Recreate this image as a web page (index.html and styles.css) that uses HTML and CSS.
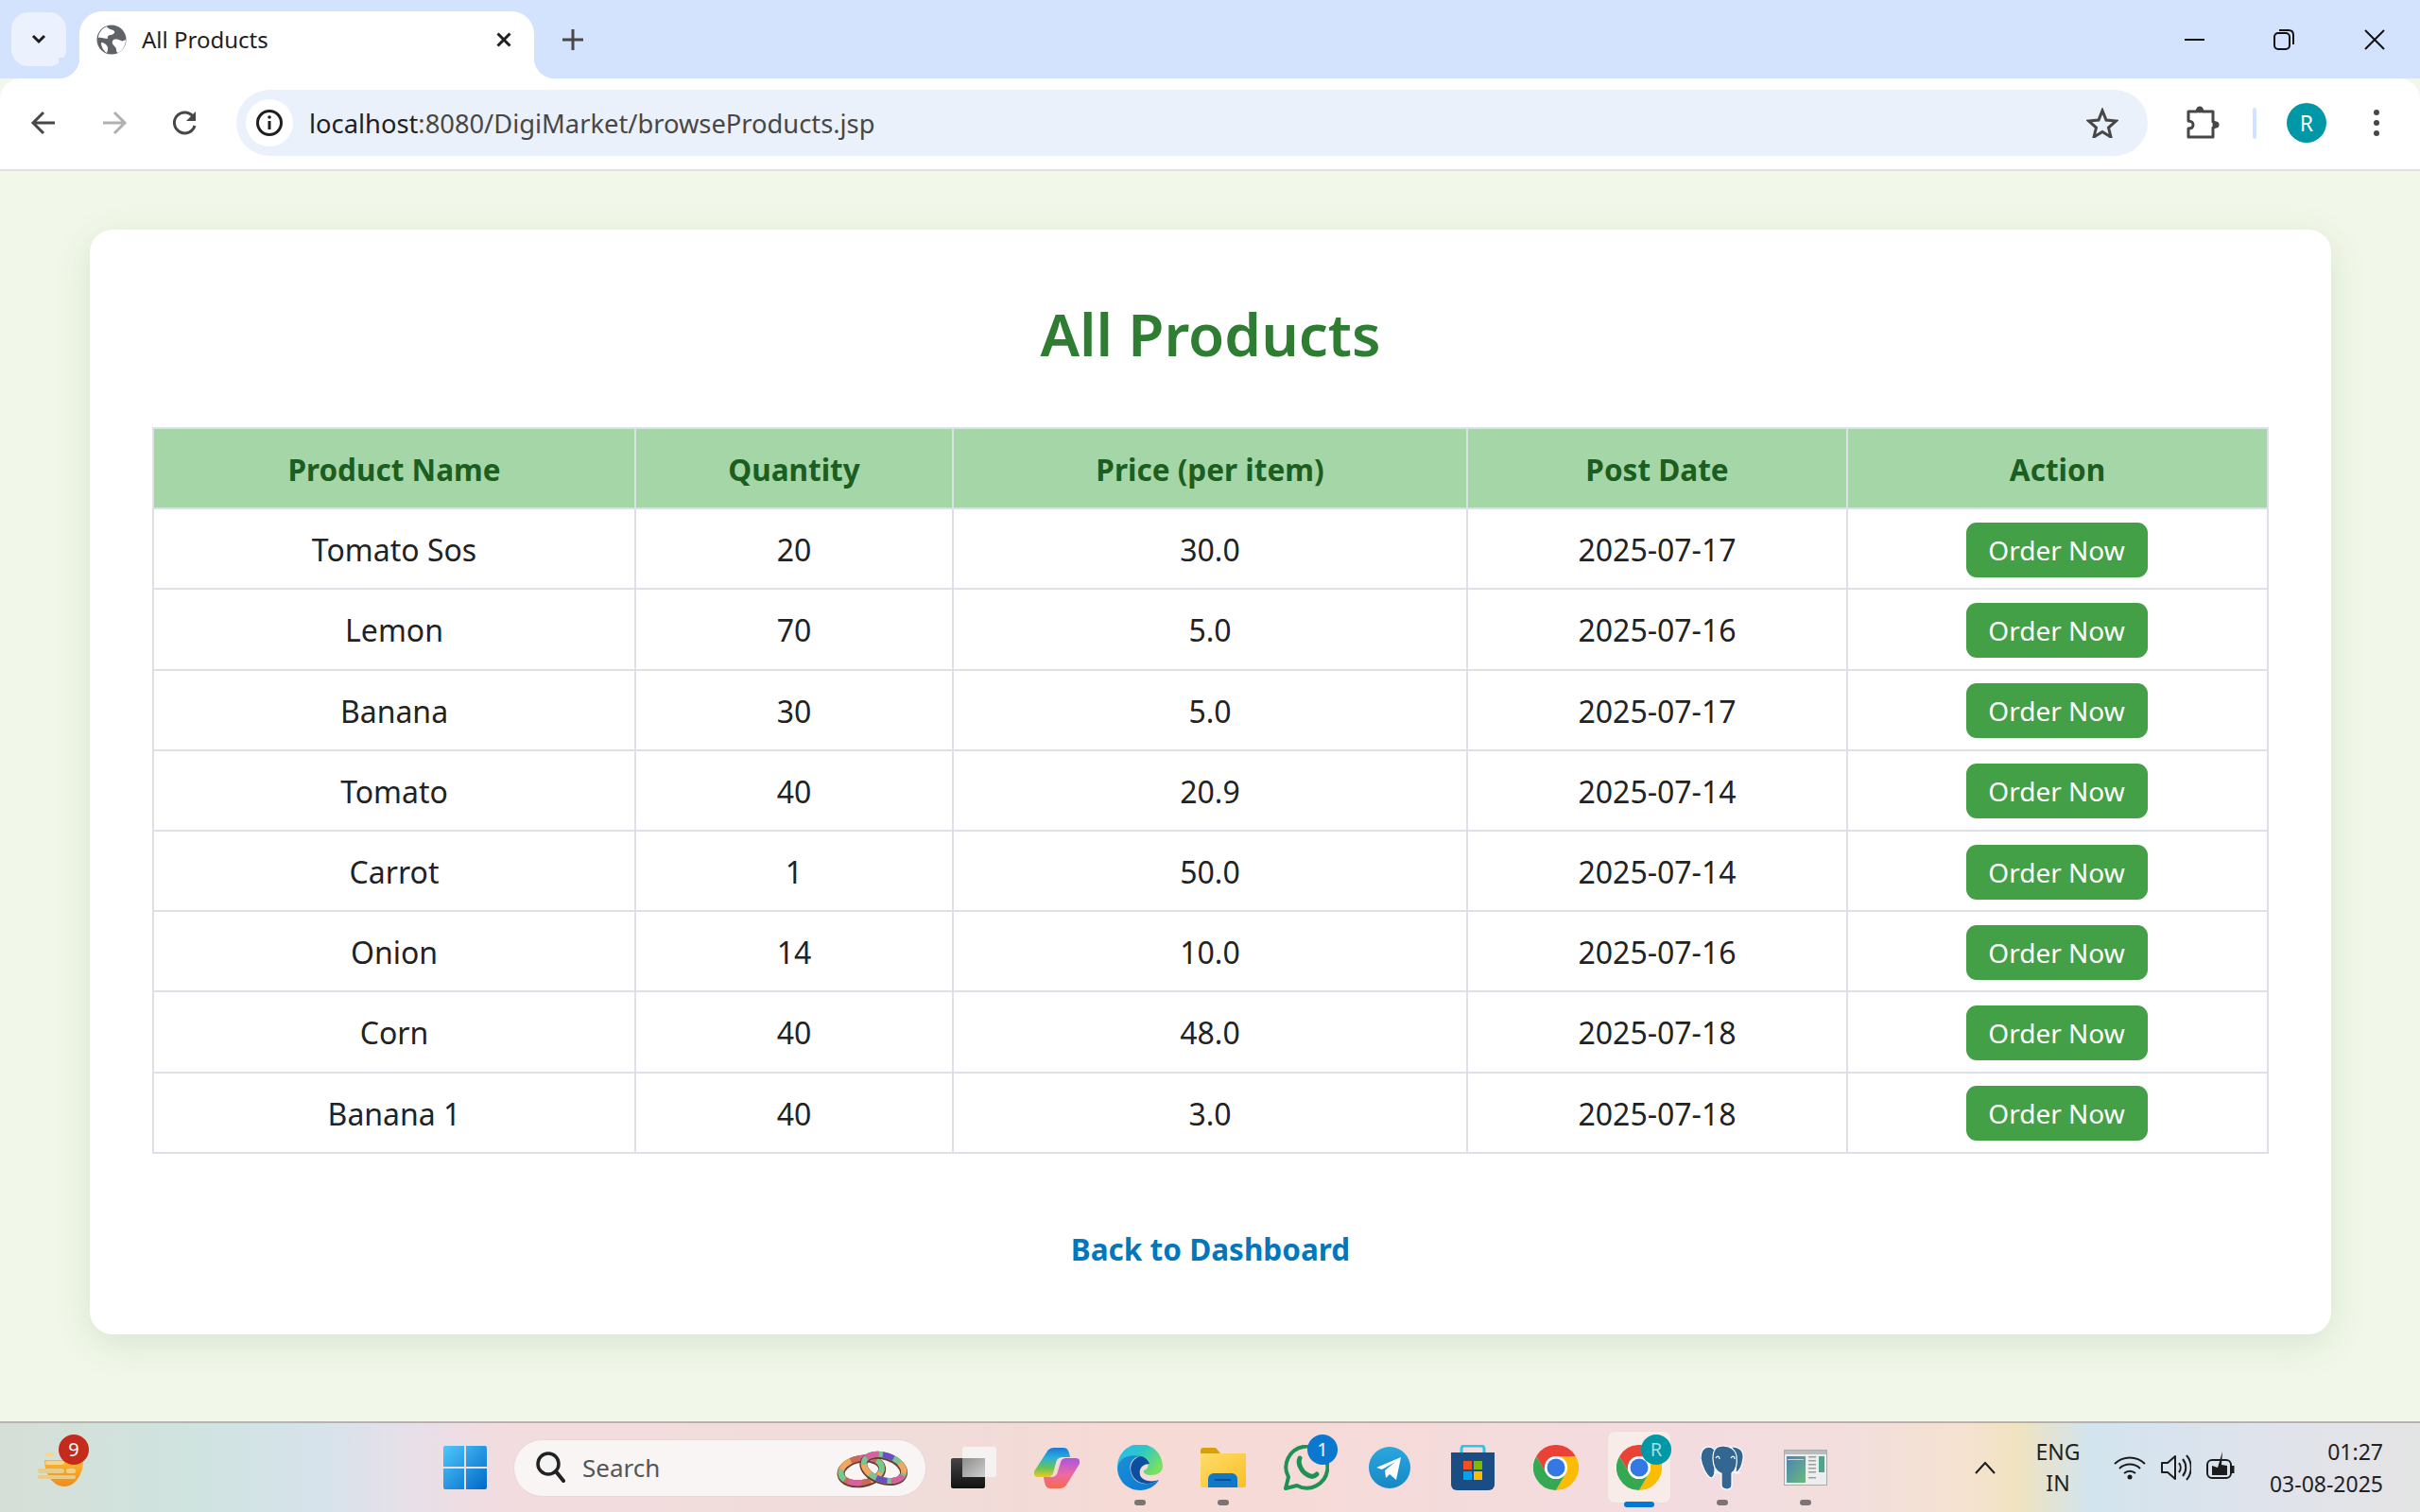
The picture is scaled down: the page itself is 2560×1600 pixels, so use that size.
FILE: index.html
```html
<!DOCTYPE html>
<html lang="en">
<head>
    <meta charset="UTF-8">
    <title>All Products</title>
    <link rel="stylesheet" href="styles.css">
</head>
<body>
    <!-- Browser tabs -->
    <div class="tabstrip">
        <div class="tab-search">
            <svg width="18" height="12" viewBox="0 0 18 12"><path d="M3 2l6 6 6-6" fill="none" stroke="#1f1f1f" stroke-width="3"/></svg>
        </div>
        <div class="tab">
            <svg class="favicon" width="32" height="32" viewBox="0 0 32 32">
                <circle cx="16" cy="16" r="15.5" fill="#5f6368"/>
                <path d="M11 2c1 3 6 3 8 5 1 2-2 4-4 4s-4 2-3 4c-3 0-7-2-10-1 0-5 4-10 9-12zM18 16c3-1 6 0 8 1 1 1 3 0 5-1 0 6-3 11-8 14-3-1-1-4-3-6-2-3-5-4-2-8zM5 19c3 0 6 2 7 5 0 2 0 4-1 6-3-2-6-6-6-11z" fill="#fff"/>
            </svg>
            <span class="tab-title">All Products</span>
            <svg class="tab-close" width="18" height="18" viewBox="0 0 18 18"><path d="M2.5 2.5l13 13M15.500 2.500l-13 13" stroke="#1f1f1f" stroke-width="3"/></svg>
        </div>
        <svg class="new-tab" width="24" height="24" viewBox="0 0 24 24"><path d="M12 1v22M1 12h22" stroke="#474747" stroke-width="3"/></svg>
        <div class="window-controls">
            <svg width="22" height="22" viewBox="0 0 22 22"><path d="M0 11h21" stroke="#111" stroke-width="2"/></svg>
            <svg width="22" height="22" viewBox="0 0 22 22"><rect x="1" y="4" width="16" height="17" rx="4" fill="none" stroke="#111" stroke-width="2"/><path d="M6 1h10c3 0 5 2 5 5v10" fill="none" stroke="#111" stroke-width="2"/></svg>
            <svg width="22" height="22" viewBox="0 0 22 22"><path d="M1 1l20 20M21 1L1 21" stroke="#111" stroke-width="2"/></svg>
        </div>
    </div>

    <!-- Address bar -->
    <div class="toolbar">
        <svg class="nav-icon" width="30" height="30" viewBox="0 0 30 30"><path d="M27 15H5M15 4L4 15l11 11" fill="none" stroke="#474747" stroke-width="3"/></svg>
        <svg class="nav-icon" width="30" height="30" viewBox="0 0 30 30"><path d="M3 15h22M15 4l11 11-11 11" fill="none" stroke="#b1b1b1" stroke-width="3"/></svg>
        <svg class="nav-icon" width="30" height="30" viewBox="0 0 30 30"><path d="M25 18a11 11 0 1 1-2-10" fill="none" stroke="#474747" stroke-width="3"/><path d="M26 3v10H16z" fill="#474747"/></svg>
        <div class="omnibox">
            <div class="site-info">
                <svg width="30" height="30" viewBox="0 0 30 30"><circle cx="15" cy="15" r="12.500" fill="none" stroke="#1f1f1f" stroke-width="3"/><path d="M15 13v9" stroke="#1f1f1f" stroke-width="3"/><circle cx="15" cy="9" r="1.800" fill="#1f1f1f"/></svg>
            </div>
            <span class="url"><span class="url-host">localhost</span>:8080/DigiMarket/browseProducts.jsp</span>
            <svg class="star" width="34" height="32" viewBox="0 0 34 32"><path d="M17 3l4 10 10.500 1-8 7 2.500 10L17 25.500 8 31l2.500-10-8-7L13 13z" fill="none" stroke="#474747" stroke-width="3"/></svg>
        </div>
        <svg class="puzzle" width="36" height="36" viewBox="0 0 36 36"><path d="M3 6h9a3 3 0 0 1 6 0h11v11a3 3 0 0 1 0 6v10H3V24c4 0 5-2 5-4s-2-4-5-4z" fill="none" stroke="#474747" stroke-width="3" stroke-linejoin="round"/><circle cx="15" cy="4" r="3.500" fill="#474747"/><circle cx="32" cy="20" r="3.500" fill="#474747"/></svg>
        <div class="toolbar-sep"></div>
        <div class="avatar">R</div>
        <div class="menu-dots"><i></i><i></i><i></i></div>
    </div>

    <!-- Page -->
    <main class="page">
        <div class="card">
            <h1>All Products</h1>
            <table>
                <colgroup>
                    <col class="col-name">
                    <col class="col-qty">
                    <col class="col-price">
                    <col class="col-date">
                    <col class="col-action">
                </colgroup>
                <thead>
                    <tr>
                        <th>Product Name</th>
                        <th>Quantity</th>
                        <th>Price (per item)</th>
                        <th>Post Date</th>
                        <th>Action</th>
                    </tr>
                </thead>
                <tbody>
                    <tr><td>Tomato Sos</td><td>20</td><td>30.0</td><td>2025-07-17</td><td><a class="order-btn">Order Now</a></td></tr>
                    <tr><td>Lemon</td><td>70</td><td>5.0</td><td>2025-07-16</td><td><a class="order-btn">Order Now</a></td></tr>
                    <tr><td>Banana</td><td>30</td><td>5.0</td><td>2025-07-17</td><td><a class="order-btn">Order Now</a></td></tr>
                    <tr><td>Tomato</td><td>40</td><td>20.9</td><td>2025-07-14</td><td><a class="order-btn">Order Now</a></td></tr>
                    <tr><td>Carrot</td><td>1</td><td>50.0</td><td>2025-07-14</td><td><a class="order-btn">Order Now</a></td></tr>
                    <tr><td>Onion</td><td>14</td><td>10.0</td><td>2025-07-16</td><td><a class="order-btn">Order Now</a></td></tr>
                    <tr><td>Corn</td><td>40</td><td>48.0</td><td>2025-07-18</td><td><a class="order-btn">Order Now</a></td></tr>
                    <tr><td>Banana 1</td><td>40</td><td>3.0</td><td>2025-07-18</td><td><a class="order-btn">Order Now</a></td></tr>
                </tbody>
            </table>
            <a class="back-link">Back to Dashboard</a>
        </div>
    </main>

    <!-- Windows taskbar -->
    <footer class="taskbar">
        <div class="widget">
            <svg width="48" height="40" viewBox="0 0 48 40">
                <defs><linearGradient id="bowl" x1="0" y1="0" x2="0" y2="1"><stop offset="0" stop-color="#f7b733"/><stop offset="1" stop-color="#f08c1a"/></linearGradient></defs>
                <path d="M7 10h41c0 16-9 28-20 28S7 26 7 10z" fill="url(#bowl)"/>
                <rect x="8" y="2" width="10" height="4" rx="2" fill="#f4d98e"/>
                <rect x="8" y="11" width="20" height="4" rx="2" fill="#f2d592"/>
                <rect x="0" y="19" width="28" height="5" rx="2.500" fill="#e8cc8c"/>
                <rect x="30" y="19" width="10" height="5" rx="2.500" fill="#f2cf85"/>
                <rect x="0" y="26" width="40" height="4" rx="2" fill="#e8cc8c"/>
            </svg>
            <span class="badge badge-red">9</span>
        </div>
        <div class="task-item start">
            <svg width="46" height="46" viewBox="0 0 46 46">
                <defs><linearGradient id="win" x1="0" y1="0" x2="1" y2="1"><stop offset="0" stop-color="#4fc8fb"/><stop offset="1" stop-color="#0068c8"/></linearGradient></defs>
                <path d="M0 2a2 2 0 0 1 2-2h20v22H0zM24 0h20a2 2 0 0 1 2 2v20H24zM0 24h22v22H2a2 2 0 0 1-2-2zM24 24h22v20a2 2 0 0 1-2 2H24z" fill="url(#win)"/>
            </svg>
        </div>
        <div class="search-box">
            <svg width="32" height="36" viewBox="0 0 32 36"><circle cx="14" cy="14" r="11" fill="#f4f4f4" stroke="#222" stroke-width="3.500"/><path d="M22 22l8 10" stroke="#222" stroke-width="4" stroke-linecap="round"/></svg>
            <span class="search-text">Search</span>
            <svg class="rings" width="76" height="44" viewBox="0 0 76 44">
                <g fill="none" transform="rotate(-10 26 24)">
                    <ellipse cx="26" cy="26" rx="22" ry="13" stroke="#6b3a30" stroke-width="8"/>
                    <ellipse cx="26" cy="25" rx="22" ry="13" stroke="#c96a55" stroke-width="6"/>
                    <ellipse cx="26" cy="25" rx="22" ry="13" stroke="#f0a860" stroke-width="6" stroke-dasharray="14 40" stroke-dashoffset="-6"/>
                    <ellipse cx="26" cy="25" rx="22" ry="13" stroke="#d85fa0" stroke-width="6" stroke-dasharray="14 40" stroke-dashoffset="-30"/>
                    <ellipse cx="26" cy="25" rx="22" ry="13" stroke="#78c88c" stroke-width="6" stroke-dasharray="12 42" stroke-dashoffset="-48"/>
                </g>
                <g fill="none" transform="rotate(18 50 22)">
                    <ellipse cx="50" cy="23" rx="22" ry="13" stroke="#6b3a30" stroke-width="8"/>
                    <ellipse cx="50" cy="22" rx="22" ry="13" stroke="#79c494" stroke-width="6"/>
                    <ellipse cx="50" cy="22" rx="22" ry="13" stroke="#d85fa0" stroke-width="6" stroke-dasharray="14 44" stroke-dashoffset="-2"/>
                    <ellipse cx="50" cy="22" rx="22" ry="13" stroke="#6a4fc4" stroke-width="6" stroke-dasharray="12 46" stroke-dashoffset="-20"/>
                    <ellipse cx="50" cy="22" rx="22" ry="13" stroke="#f0a860" stroke-width="6" stroke-dasharray="12 46" stroke-dashoffset="-40"/>
                </g>
            </svg>
        </div>
        <div class="task-items">
            <div class="task-item">
                <svg width="48" height="44" viewBox="0 0 48 44">
                    <defs>
                        <linearGradient id="blk" x1="0" y1="0" x2="0" y2="1"><stop offset="0" stop-color="#454545"/><stop offset="1" stop-color="#111"/></linearGradient>
                        <linearGradient id="lap" x1="0" y1="0" x2="1" y2="1"><stop offset="0" stop-color="#8d8d8d"/><stop offset="1" stop-color="#cfcfcf"/></linearGradient>
                    </defs>
                    <rect x="0" y="12" width="36" height="32" rx="2" fill="url(#blk)"/>
                    <rect x="12" y="0" width="36" height="32" rx="2" fill="#f5f3f2"/>
                    <rect x="12" y="12" width="24" height="20" fill="url(#lap)"/>
                </svg>
            </div>
            <div class="task-item">
                <svg width="48" height="43" viewBox="0 0 48 43">
                    <defs>
                        <linearGradient id="cop1" x1="0" y1="0" x2="0" y2="1"><stop offset="0" stop-color="#1a78dc"/><stop offset=".35" stop-color="#2ab0d8"/><stop offset=".7" stop-color="#6cc44e"/><stop offset="1" stop-color="#f2c62f"/></linearGradient>
                        <linearGradient id="cop2" x1="0" y1="0" x2="0" y2="1"><stop offset="0" stop-color="#a855e0"/><stop offset=".55" stop-color="#ee6aa0"/><stop offset="1" stop-color="#f7694a"/></linearGradient>
                    </defs>
                    <path d="M13 5C15 1 18 0 22 0h9c4 0 6 3 7 10h-7c-5 0-7 2-8 6l-3 11c-1 3-3 4-6 4H4c-3 0-5-2-4-6z" fill="url(#cop1)"/>
                    <path d="M35 38c-2 4-5 5-9 5h-9c-4 0-6-3-7-12h7c5 0 7-2 8-6l3-10c1-3 3-4 6-4h10c3 0 5 2 4 6z" fill="url(#cop2)"/>
                </svg>
            </div>
            <div class="task-item has-dot">
                <svg width="48" height="48" viewBox="0 0 48 48">
                    <defs>
                        <linearGradient id="edge1" x1="0" y1="0" x2="1" y2=".6"><stop offset="0" stop-color="#2bb8ee"/><stop offset=".5" stop-color="#2cc8c8"/><stop offset="1" stop-color="#7ae05f"/></linearGradient>
                        <linearGradient id="edge2" x1="0" y1="0" x2="1" y2="1"><stop offset="0" stop-color="#1a8fd8"/><stop offset="1" stop-color="#0d78d0"/></linearGradient>
                    </defs>
                    <path d="M0 24A24 24 0 0 1 48 22C48 29 42 32 36 32C31 32 27 30 28 27C33 26 34 20 30 16C24 10 8 10 0 24Z" fill="url(#edge1)"/>
                    <path d="M0 24C3 12 14 10 24 12C16 13 12 20 14 28C16 40 30 46 44 37C40 44 32 48 24 48C10 48 0 37 0 24Z" fill="url(#edge2)"/>
                    <path d="M24 12C17 14 12 21 15 30C18 40 32 45 44 37C36 40 26 38 24 32C22 24 28 20 34 20C32 15 28 12 24 12Z" fill="#0b4f9e"/>
                </svg>
            </div>
            <div class="task-item has-dot">
                <svg width="48" height="42" viewBox="0 0 48 42">
                    <defs><linearGradient id="folder" x1="0" y1="0" x2="1" y2="1"><stop offset="0" stop-color="#ffdc6b"/><stop offset="1" stop-color="#fbbf24"/></linearGradient></defs>
                    <path d="M0 3a3 3 0 0 1 3-3h13l5 6h24a3 3 0 0 1 3 3v6H0z" fill="#d99e08"/>
                    <path d="M0 6h48v34a2 2 0 0 1-2 2H2a2 2 0 0 1-2-2z" fill="url(#folder)"/>
                    <path d="M8 33a6 6 0 0 1 6-6h19a6 6 0 0 1 6 6v9H8z" fill="#0f78c8"/>
                    <rect x="15" y="33" width="17" height="2" fill="#0a4f8c"/>
                </svg>
            </div>
            <div class="task-item">
                <svg width="48" height="48" viewBox="0 0 48 48">
                    <path d="M2 46l3-12A22 22 0 1 1 14 43z" fill="none" stroke="#1f9155" stroke-width="4" stroke-linejoin="round"/>
                    <path d="M17 14C14 20 20 29 24 31C28 34 32 34 35 31" fill="none" stroke="#1f9155" stroke-width="5" stroke-linecap="round"/>
                </svg>
                <span class="badge badge-blue">1</span>
            </div>
            <div class="task-item">
                <svg width="44" height="44" viewBox="0 0 44 44">
                    <defs><linearGradient id="tg" x1="0" y1="0" x2="0" y2="1"><stop offset="0" stop-color="#2aa7df"/><stop offset="1" stop-color="#1688c4"/></linearGradient></defs>
                    <circle cx="22" cy="22" r="22" fill="url(#tg)"/>
                    <path d="M8 22L34 11l-5 24-7-6-4 4-1-8 11-9-14 8z" fill="#fff"/>
                </svg>
            </div>
            <div class="task-item">
                <svg width="46" height="48" viewBox="0 0 46 48">
                    <path d="M11 10V4a3 3 0 0 1 3-3h18a3 3 0 0 1 3 3v6" fill="none" stroke="#2ac4ee" stroke-width="3"/>
                    <path d="M0 8h46v34a6 6 0 0 1-6 6H6a6 6 0 0 1-6-6z" fill="#1b4d85"/>
                    <rect x="13" y="17" width="9" height="9" fill="#f25022"/>
                    <rect x="24" y="17" width="9" height="9" fill="#7fba00"/>
                    <rect x="13" y="28" width="9" height="9" fill="#00a4ef"/>
                    <rect x="24" y="28" width="9" height="9" fill="#ffb900"/>
                </svg>
            </div>
            <div class="task-item">
                <svg width="48" height="48" viewBox="0 0 48 48">
                    <g id="chrome-logo">
                        <path d="M24 12H44.800A24 24 0 0 0 3.200 12L13.600 30A12 12 0 0 1 24 12Z" fill="#ea4335"/>
                        <path d="M44.800 12H24A12 12 0 0 1 34.400 30L24 48A24 24 0 0 0 44.800 12Z" fill="#fbbc04"/>
                        <path d="M3.200 12L13.600 30A12 12 0 0 0 34.400 30L24 48A24 24 0 0 1 3.200 12Z" fill="#34a853"/>
                        <circle cx="24" cy="24" r="12" fill="#fff"/>
                        <circle cx="24" cy="24" r="9.500" fill="#3478e5"/>
                    </g>
                </svg>
            </div>
            <div class="task-item active">
                <div class="active-bg"></div>
                <svg width="48" height="48" viewBox="0 0 48 48"><use href="#chrome-logo"/></svg>
                <span class="badge badge-teal">R</span>
                <div class="active-bar"></div>
            </div>
            <div class="task-item has-dot">
                <svg width="46" height="48" viewBox="0 0 46 48">
                    <g fill="#336791" stroke="#fff" stroke-width="1.200">
                        <path d="M8 2C2 3 0 8 0 14C1 22 6 33 11 35C13 35 14 33 15 30L15 5C13 3 11 2 8 2Z"/>
                        <path d="M32 2C40 1 46 6 45 14C44 22 41 28 37 30C37 28 38 20 37 12C36 8 34 4 32 2Z"/>
                        <path d="M24 1C17 1 13 4 13 14C13 22 15 27 21 30L22 30V42C22 46 25 47 28 47C31 47 33 45 33 42V30C37 27 39 20 38 12C37 5 31 1 24 1Z"/>
                    </g>
                    <path d="M14 29l7 1M33 29l9 1M16 14c2-3 4-2 4 1M32 14c2-3 4-2 4 1" fill="none" stroke="#fff" stroke-width="1.200"/>
                </svg>
            </div>
            <div class="task-item has-dot">
                <svg width="46" height="38" viewBox="0 0 46 38">
                    <defs><linearGradient id="pane" x1="0" y1="0" x2="1" y2="1"><stop offset="0" stop-color="#4d82b8"/><stop offset="1" stop-color="#68ba78"/></linearGradient></defs>
                    <rect x=".5" y=".5" width="45" height="37" fill="#eceeee" stroke="#a7abab"/>
                    <rect x="1" y="1" width="44" height="4" fill="#b9bcbc"/>
                    <rect x="3" y="7" width="20" height="28" fill="url(#pane)"/>
                    <rect x="4" y="10" width="17" height="1" fill="#c3d7e4"/>
                    <rect x="26" y="7" width="8" height="1.500" fill="#9a9f9e"/>
                    <rect x="26" y="11" width="8" height="1.500" fill="#9a9f9e"/>
                    <rect x="26" y="15" width="8" height="1.500" fill="#9a9f9e"/>
                    <rect x="26" y="19" width="8" height="1.500" fill="#9a9f9e"/>
                    <rect x="26" y="23" width="8" height="1.500" fill="#9a9f9e"/>
                    <rect x="26" y="29" width="8" height="1.500" fill="#9a9f9e"/>
                    <rect x="37" y="7" width="6" height="17" fill="#4fa58a"/>
                </svg>
            </div>
        </div>
        <div class="tray">
            <svg class="tray-chevron" width="22" height="14" viewBox="0 0 22 14"><path d="M1 13L11 2l10 11" fill="none" stroke="#1c1c1c" stroke-width="2"/></svg>
            <div class="lang"><span>ENG</span><span>IN</span></div>
            <svg class="tray-icon" width="34" height="26" viewBox="0 0 34 26"><path d="M1 9a23 23 0 0 1 32 0M6 14a16 16 0 0 1 22 0M11 19a9 9 0 0 1 12 0" fill="none" stroke="#1c1c1c" stroke-width="2"/><circle cx="17" cy="23" r="2.500" fill="#1c1c1c"/></svg>
            <svg class="tray-icon" width="32" height="28" viewBox="0 0 32 28"><path d="M1 9h6l8-7v24l-8-7H1z" fill="none" stroke="#1c1c1c" stroke-width="2" stroke-linejoin="round"/><path d="M19 9a8 8 0 0 1 0 10M23 5a14 14 0 0 1 0 18M27 1a20 20 0 0 1 0 26" fill="none" stroke="#1c1c1c" stroke-width="2"/></svg>
            <svg class="tray-icon tray-battery" width="30" height="30" viewBox="0 0 30 30"><rect x="1" y="9" width="25" height="19" rx="5" fill="none" stroke="#1c1c1c" stroke-width="2"/><rect x="27" y="15" width="2.500" height="8" fill="#1c1c1c"/><path d="M6 15l6 2 5-17-1 14 6 1v10H6z" fill="#1c1c1c"/></svg>
            <div class="clock"><span>01:27</span><span>03-08-2025</span></div>
        </div>
    </footer>
</body>
</html>
```

FILE: styles.css
```css
* {
    box-sizing: border-box;
}
body {
    margin: 0;
    width: 2560px;
    height: 1600px;
    overflow: hidden;
    display: flex;
    flex-direction: column;
    font-family: "Noto Sans", "Open Sans", sans-serif;
    background-color: #f1f8e9;
}

/* tabs */
.tabstrip {
    height: 83px;
    background-color: #d3e3fd;
    display: flex;
    align-items: flex-start;
    padding-left: 12px;
}
.tab-search {
    width: 58px;
    height: 57px;
    margin-top: 13px;
    border-radius: 18px;
    background-color: #ebf1fd;
    display: flex;
    align-items: center;
    justify-content: center;
}
.tab {
    position: relative;
    width: 481px;
    height: 71px;
    margin-top: 12px;
    margin-left: 14px;
    padding: 0 20px 12px 18px;
    background-color: #fff;
    border-radius: 24px 24px 0 0;
    display: flex;
    align-items: center;
}
.tab::before,
.tab::after {
    content: "";
    position: absolute;
    bottom: 0;
    width: 22px;
    height: 22px;
}
.tab::before {
    left: -22px;
    background: radial-gradient(circle at 0 0, #d3e3fd 22px, #fff 22.5px);
}
.tab::after {
    right: -22px;
    background: radial-gradient(circle at 100% 0, #d3e3fd 22px, #fff 22.5px);
}
.tab-title {
    margin-left: 16px;
    font-size: 24px;
    color: #1f1f1f;
    flex: 1;
}
.tab-close {
    margin-right: 3px;
}
.new-tab {
    margin-top: 30px;
    margin-left: 29px;
}
.window-controls {
    margin-left: auto;
    margin-top: 31px;
    padding-right: 37px;
    display: flex;
    gap: 74px;
}
.window-controls svg:first-child {
    margin-right: -2px;
}

/* address bar */
.toolbar {
    height: 98px;
    padding-bottom: 2px;
    background-color: #fff;
    border-bottom: 2px solid #e1e1e1;
    border-radius: 22px 22px 0 0;
    display: flex;
    align-items: center;
    padding-left: 31px;
}
.nav-icon {
    margin-right: 45px;
    flex: none;
}
.nav-icon:nth-child(3) {
    margin-right: 39px;
}
.omnibox {
    width: 2022px;
    height: 70px;
    border-radius: 35px;
    background-color: #ebf1fb;
    display: flex;
    align-items: center;
    padding-left: 10px;
    padding-right: 31px;
}
.site-info {
    width: 50px;
    height: 50px;
    border-radius: 50%;
    background-color: #fff;
    display: flex;
    align-items: center;
    justify-content: center;
}
.url {
    margin-left: 17px;
    font-size: 27.3px;
    color: #474747;
    flex: 1;
}
.url-host {
    color: #1f1f1f;
}
.puzzle {
    margin-left: 40px;
}
.toolbar-sep {
    width: 4px;
    height: 33px;
    margin-left: 35px;
    border-radius: 2px;
    background-color: #d3e3fd;
}
.avatar {
    width: 42px;
    height: 42px;
    margin-left: 32px;
    border-radius: 50%;
    background-color: #0097a7;
    color: #fff;
    font-size: 23px;
    display: flex;
    align-items: center;
    justify-content: center;
}
.menu-dots {
    margin-left: 50px;
    display: flex;
    flex-direction: column;
    gap: 5px;
}
.menu-dots i {
    display: block;
    width: 6px;
    height: 6px;
    border-radius: 50%;
    background-color: #474747;
}

/* page */
.page {
    flex: 1;
    padding: 62px 94px 0 95px;
}
.card {
    height: 1169px;
    padding: 63px 66px 0;
    background-color: #fff;
    border-radius: 24px;
    box-shadow: 0 10px 40px rgba(46, 70, 30, 0.12);
}
h1 {
    margin: 0 0 52px;
    text-align: center;
    font-size: 62px;
    line-height: 94px;
    font-weight: 600;
    color: #2e7d32;
}
table {
    width: 2237px;
    table-layout: fixed;
    border-collapse: collapse;
    margin-bottom: 76px;
}
.col-name { width: 510px; }
.col-qty { width: 336px; }
.col-price { width: 544px; }
.col-date { width: 402px; }
.col-action { width: 445px; }
th, td {
    height: 85.2px;
    padding: 2px 0 0;
    border: 2px solid #dde0e6;
    text-align: center;
    vertical-align: middle;
    font-size: 32px;
    color: #222;
}
th {
    font-size: 31.5px;
    background-color: #a5d6a7;
    color: #1b5e20;
    font-weight: 700;
}
td {
    font-weight: 400;
}
.order-btn {
    display: inline-block;
    width: 192px;
    height: 58px;
    line-height: 58px;
    margin-left: -2px;
    border-radius: 11px;
    background-color: #43a047;
    color: #fff;
    font-size: 28px;
    vertical-align: middle;
}
.back-link {
    display: block;
    text-align: center;
    font-size: 31.5px;
    line-height: 50px;
    font-weight: 700;
    color: #0277bd;
}

/* taskbar */
.taskbar {
    height: 96px;
    border-top: 2px solid #b9b3b0;
    background: linear-gradient(90deg, #d6dfd7 0, #cfe3df 200px, #d7e3ec 340px, #e8dfe8 440px, #f3dcdf 540px, #f0dcd9 1000px, #f6dad5 1200px, #f3dce0 1800px, #f2dedc 1960px, #f5e2d0 2080px, #f0e3c0 2135px, #d2e4ee 2210px, #e0e3ec 2400px, #e4e4e4 2560px);
    display: flex;
    align-items: center;
}
.widget {
    position: relative;
    width: 448px;
    padding-left: 40px;
    padding-top: 4px;
    display: flex;
}
.task-item {
    position: relative;
    width: 88px;
    height: 94px;
    flex: none;
    display: flex;
    align-items: center;
    justify-content: center;
}
.start {
    margin-right: 7px;
}
.search-box {
    width: 437px;
    height: 61px;
    margin-right: 6px;
    padding: 0 18px 0 22px;
    border: 1px solid #e6d8d8;
    border-radius: 31px;
    background-color: #faf5f5;
    display: flex;
    align-items: center;
    flex: none;
}
.search-text {
    margin-left: 18px;
    font-size: 26px;
    color: #555;
    flex: 1;
}
.task-items {
    display: flex;
    flex: none;
}
.has-dot::after {
    content: "";
    position: absolute;
    left: 38px;
    bottom: 7px;
    width: 12px;
    height: 6px;
    border-radius: 3px;
    background-color: #7c7474;
}
.badge {
    position: absolute;
    width: 32px;
    height: 32px;
    border-radius: 50%;
    color: #fff;
    font-size: 20px;
    line-height: 32px;
    text-align: center;
}
.badge-red {
    left: 62px;
    top: -13px;
    background-color: #c42b1c;
}
.badge-blue {
    left: 45px;
    top: 12px;
    background-color: #0b78d0;
}
.badge-teal {
    left: 46px;
    top: 12px;
    background-color: #0097a7;
    color: #9ee0e6;
}
.active-bg {
    position: absolute;
    left: 10px;
    top: 8px;
    width: 68px;
    height: 77px;
    border-radius: 8px;
    background-color: #f8ece9;
    border: 1px solid #eddcda;
}
.active svg {
    position: relative;
}
.active-bar {
    position: absolute;
    left: 28px;
    bottom: 5px;
    width: 32px;
    height: 6px;
    border-radius: 3px;
    background-color: #0078d4;
}
.tray {
    flex: 1;
    display: flex;
    align-items: center;
    padding-left: 135px;
}
.lang {
    width: 60px;
    margin-left: 36px;
    display: flex;
    flex-direction: column;
    align-items: center;
    font-size: 23px;
    line-height: 33px;
    color: #222;
}
.lang + .tray-icon {
    margin-left: 29px;
}
.tray-icon + .tray-icon {
    margin-left: 16px;
}
.tray-battery {
    margin-top: -4px;
}
.clock {
    margin-left: auto;
    padding-right: 39px;
    display: flex;
    flex-direction: column;
    align-items: flex-end;
    font-size: 23px;
    line-height: 34px;
    color: #222;
}
```
